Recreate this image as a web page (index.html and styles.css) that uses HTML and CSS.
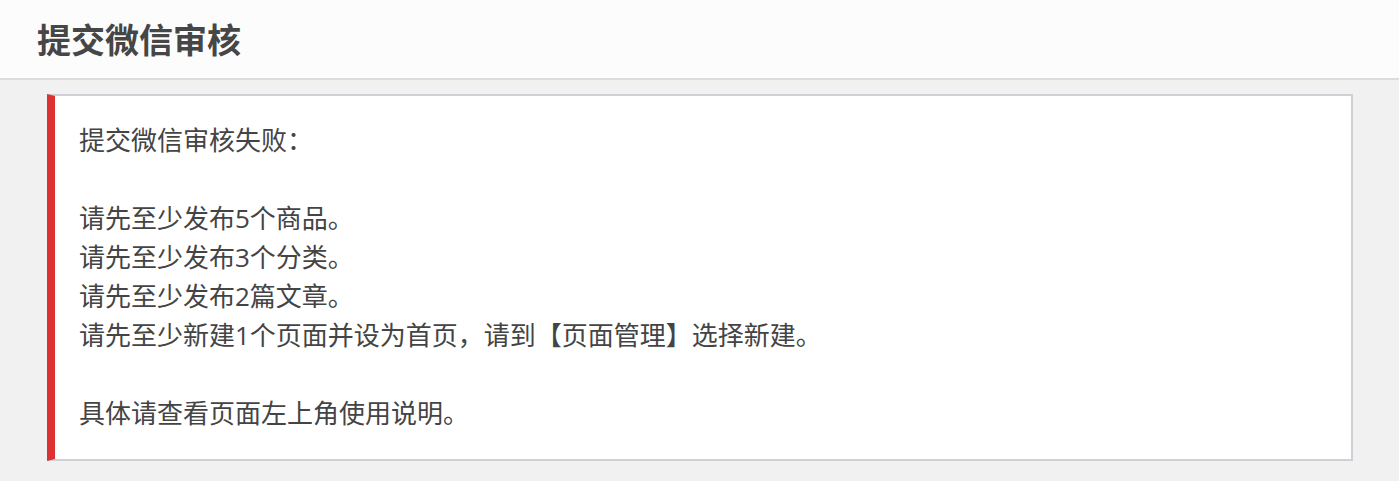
FILE: index.html
```html
<!DOCTYPE html>
<html lang="zh-CN">
<head>
<meta charset="utf-8">
<title>提交微信审核</title>
<link rel="stylesheet" href="styles.css">
</head>
<body>
<header class="page-header">
  <h1 class="page-title">提交微信审核</h1>
</header>
<main class="page-body">
  <div class="notice notice-error">
    <p class="notice-text">提交微信审核失败：<br><br>请先至少发布5个商品。<br>请先至少发布3个分类。<br>请先至少发布2篇文章。<br>请先至少新建1个页面并设为首页，请到【页面管理】选择新建。<br><br>具体请查看页面左上角使用说明。</p>
  </div>
</main>
</body>
</html>
```
FILE: styles.css
```css
html, body {
  margin: 0;
  padding: 0;
}
body {
  background: #f1f1f1;
  font-family: "Open Sans", "Noto Sans CJK SC", sans-serif;
  color: #444;
  width: 1399px;
  height: 481px;
  overflow: hidden;
}
.page-header {
  height: 78px;
  background: #fcfcfc;
  border-bottom: 2px solid #dcdcde;
  display: flex;
  align-items: center;
  padding-left: 37px;
}
.page-title {
  margin: 0;
  font-size: 34px;
  font-weight: 700;
  color: #464646;
  line-height: 1;
  font-family: "Noto Sans CJK SC", sans-serif;
}
.page-body {
  padding: 14px 46px 0 47px;
}
.notice {
  background: #fff;
  border: 2px solid #cdd0d4;
  border-left: 8px solid #dc3232;
  padding: 25px 24px 26px 24px;
}
.notice-text {
  margin: 0;
  font-size: 26px;
  line-height: 39px;
  color: #444;
}
```
